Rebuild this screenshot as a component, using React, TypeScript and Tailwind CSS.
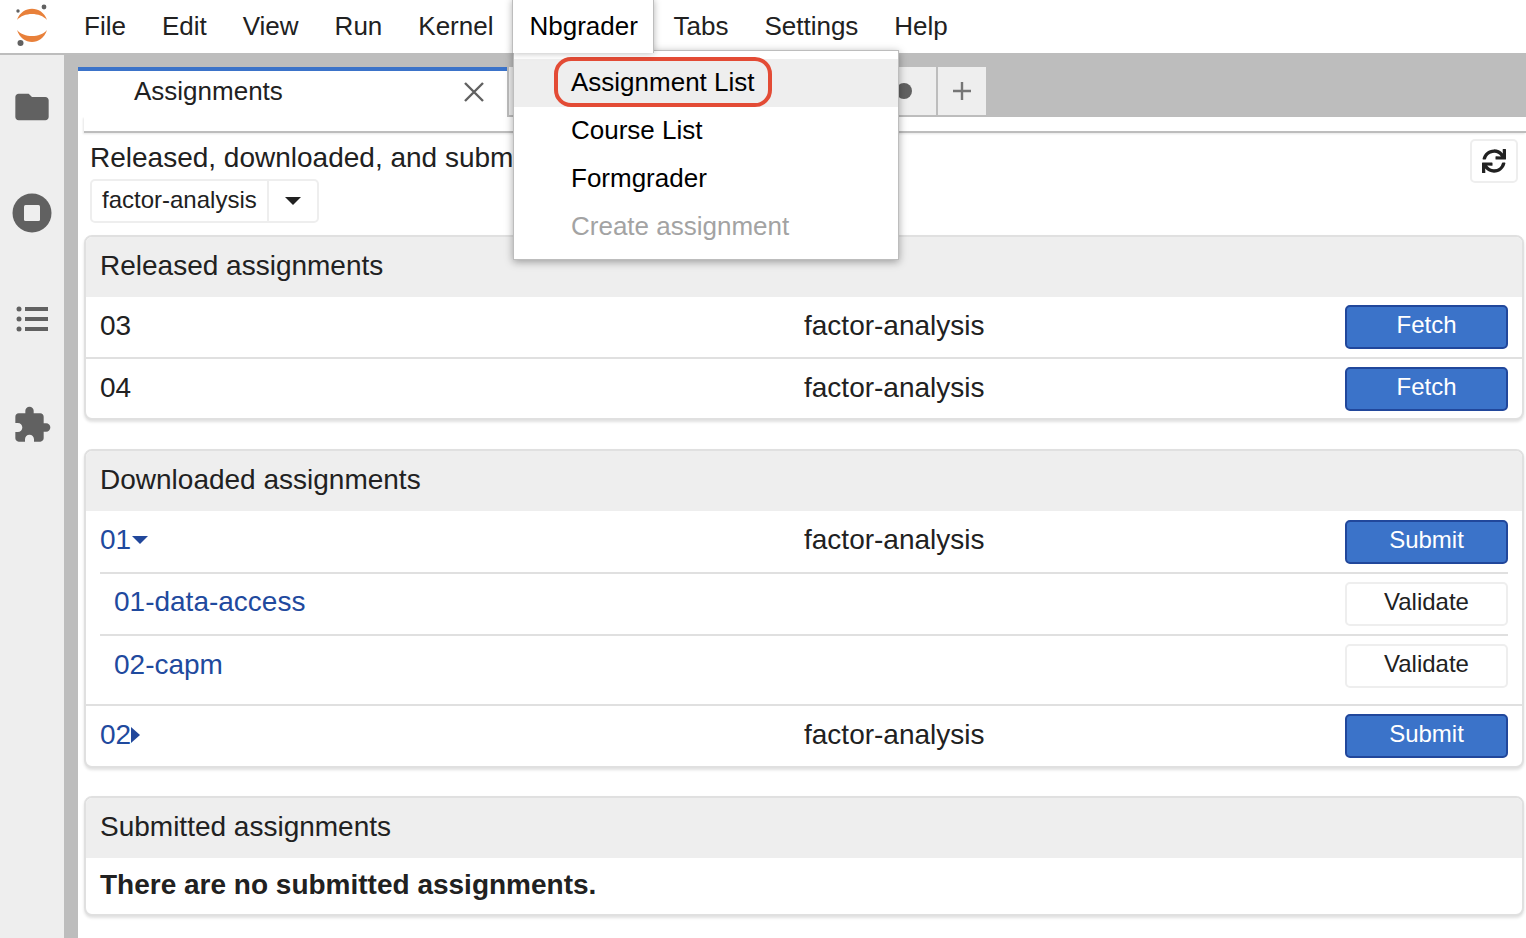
import React from 'react'
import { FaSync } from 'react-icons/fa'
import { MdExtension, MdFolder } from 'react-icons/md'

const menus = ['File', 'Edit', 'View', 'Run', 'Kernel', 'Nbgrader', 'Tabs', 'Settings', 'Help']

const JupyterLogo = () => (
  <svg width="64" height="53" viewBox="0 0 64 53">
    <path d="M17 20C22 5 42 5 47 20C40 12 24 12 17 20Z" fill="#e8803a" />
    <path d="M17 30C24 38 40 38 47 30C42 46 22 46 17 30Z" fill="#e8803a" />
    <circle cx="44" cy="7" r="2.4" fill="#616161" />
    <circle cx="18" cy="11" r="1.7" fill="#616161" />
    <circle cx="20.5" cy="43" r="3" fill="#616161" />
  </svg>
)

const StopIcon = () => (
  <svg width="40" height="40" viewBox="0 0 40 40">
    <circle cx="20" cy="20" r="19.5" fill="#616161" />
    <rect x="12" y="12" width="16" height="16" rx="1.5" fill="#eeeeee" />
  </svg>
)

const ListIcon = () => (
  <svg width="32" height="26" viewBox="0 0 32 26">
    <circle cx="3" cy="3" r="2.5" fill="#616161" />
    <circle cx="3" cy="13" r="2.5" fill="#616161" />
    <circle cx="3" cy="23" r="2.5" fill="#616161" />
    <rect x="9" y="1" width="23" height="4" fill="#616161" />
    <rect x="9" y="11" width="23" height="4" fill="#616161" />
    <rect x="9" y="21" width="23" height="4" fill="#616161" />
  </svg>
)

const BlueButton = ({ label }: { label: string }) => (
  <button className="w-[163px] h-[44px] shrink-0 rounded-[5px] border-2 border-[#21479b] bg-[#3b73c9] text-white text-[24px] leading-none pb-[4px]">
    {label}
  </button>
)

const PlainButton = ({ label }: { label: string }) => (
  <button className="w-[163px] h-[44px] shrink-0 rounded-[5px] border-2 border-[#eeeeee] bg-white text-[#212121] text-[24px] leading-none pb-[4px]">
    {label}
  </button>
)

const Panel = ({ title, className, children }: { title: string; className: string; children: React.ReactNode }) => (
  <section className={`ml-[6px] mr-[2px] rounded-[8px] border-2 border-[#e0e0e0] bg-white overflow-hidden shadow-[0_2px_3px_rgba(0,0,0,0.12)] ${className}`}>
    <h2 className="h-[60px] bg-[#eeeeee] pl-[14px] flex items-center text-[28px] text-[#212121] pb-[2px]">{title}</h2>
    {children}
  </section>
)

const App = () => {
  return (
    <div className="w-[1526px] h-[938px] relative overflow-hidden bg-white font-['Liberation_Sans',Arial,sans-serif]">
      {/* top menu */}
      <header className="h-[53px] flex items-stretch bg-white">
        <div className="w-[66px] shrink-0"><JupyterLogo /></div>
        {menus.map((m) => (
          <div
            key={m}
            className={
              m === 'Nbgrader'
                ? 'relative z-20 w-[142px] ml-[1px] mr-[1px] pl-[16px] bg-white text-black text-[26px] flex items-center pb-[1px] shadow-[0_0_7px_rgba(0,0,0,0.3)] border-x border-[#bdbdbd] h-[53px]'
                : 'px-[18px] text-[26px] text-[#212121] flex items-center pb-[1px]'
            }
          >
            {m}
          </div>
        ))}
      </header>

      <div className="h-[885px] flex">
        {/* side bar */}
        <aside className="w-[64px] shrink-0 bg-[#eeeeee] flex flex-col items-center border-t-2 border-[#bdbdbd]">
          <MdFolder className="mt-[32px] text-[#616161]" size={40} />
          <div className="mt-[66px]"><StopIcon /></div>
          <div className="mt-[73px] -ml-[1px]"><ListIcon /></div>
          <MdExtension className="mt-[73px] text-[#616161]" size={40} />
        </aside>
        <div className="w-[14px] shrink-0 bg-[#bdbdbd]" />

        <main className="flex-1 min-w-0">
          {/* tab bar */}
          <div className="h-[64px] bg-[#bdbdbd] flex items-end">
            <div className="w-[429px] h-[50px] bg-white border-t-4 border-[#3b73c9] flex items-center justify-between pl-[56px] pr-[22px] text-[26px] text-[#212121] pb-[5px]">
              <span>Assignments</span>
              <svg width="22" height="22" viewBox="0 0 22 22"><path d="M2 2L20 20M20 2L2 20" stroke="#616161" strokeWidth="2.4" fill="none" /></svg>
            </div>
            <div className="w-[431px] h-[48px] mb-[2px] bg-[#eeeeee] border-x-2 border-[#bdbdbd] flex items-center justify-end pr-[24px]">
              <div className="w-[16px] h-[16px] rounded-full bg-[#616161]" />
            </div>
            <div className="w-[48px] h-[48px] mb-[2px] bg-[#eeeeee] flex items-center justify-center">
              <svg width="18" height="18" viewBox="0 0 18 18"><path d="M9 0V18M0 9H18" stroke="#757575" strokeWidth="2.4" fill="none" /></svg>
            </div>
          </div>

          <div className="h-[16px] ml-[6px] bg-white border-b-2 border-[#bdbdbd] shadow-[-1px_1px_2px_rgba(0,0,0,0.1)]" />

          {/* toolbar */}
          <div className="h-[102px] flex justify-between pl-[12px] pr-[8px]">
            <div>
              <p className="h-[47px] pt-[7px] leading-[36px] text-[28px] text-[#212121]">
                Released, downloaded, and submitted assignments for course:
              </p>
              <div className="w-[229px] h-[44px] -mt-[1px] flex rounded-[5px] border-2 border-[#eeeeee] text-[24px] text-[#212121]">
                <span className="w-[177px] pl-[10px] flex items-center border-r-2 border-[#eeeeee] pb-[3px]">factor-analysis</span>
                <span className="flex-1 flex items-center justify-center">
                  <svg width="16" height="8" viewBox="0 0 16 8"><path d="M0 0H16L8 8Z" fill="#212121" /></svg>
                </span>
              </div>
            </div>
            <button className="mt-[6px] w-[48px] h-[44px] rounded-[5px] border-2 border-[#eeeeee] flex items-center justify-center text-[#212121]">
              <FaSync size={24} />
            </button>
          </div>

          <Panel title="Released assignments" className="h-[185px]">
            <div className="h-[62px] px-[14px] flex items-center border-b-2 border-[#e0e0e0] text-[28px] text-[#212121]">
              <span className="w-[704px] pb-[2px]">03</span>
              <span className="flex-1 pb-[2px]">factor-analysis</span>
              <BlueButton label="Fetch" />
            </div>
            <div className="h-[60px] px-[14px] flex items-center text-[28px] text-[#212121]">
              <span className="w-[704px] pb-[3px]">04</span>
              <span className="flex-1 pb-[3px]">factor-analysis</span>
              <BlueButton label="Fetch" />
            </div>
          </Panel>

          <Panel title="Downloaded assignments" className="mt-[29px] h-[319px]">
            <div className="mx-[14px] h-[63px] flex items-center border-b-2 border-[#e0e0e0] text-[28px] text-[#212121]">
              <span className="w-[704px] flex items-center text-[#1f4a9e] pb-[4px]">
                01
                <svg className="ml-[1px]" width="16" height="8" viewBox="0 0 16 8"><path d="M0 0H16L8 8Z" fill="#21479b" /></svg>
              </span>
              <span className="flex-1 pb-[4px]">factor-analysis</span>
              <BlueButton label="Submit" />
            </div>
            <div className="mx-[14px] h-[62px] flex items-center border-b-2 border-[#e0e0e0] text-[28px] text-[#1f4a9e]">
              <span className="flex-1 pl-[14px] pb-[4px]">01-data-access</span>
              <PlainButton label="Validate" />
            </div>
            <div className="mx-[14px] h-[68px] pt-[8px] flex items-start text-[28px] text-[#1f4a9e]">
              <span className="flex-1 h-[44px] pl-[14px] flex items-center pb-[3px]">02-capm</span>
              <PlainButton label="Validate" />
            </div>
            <div className="h-[62px] px-[14px] flex items-center border-t-2 border-[#e0e0e0] text-[28px] text-[#212121]">
              <span className="w-[704px] flex items-center text-[#1f4a9e] pb-[3px]">
                02
                <svg width="9" height="16" viewBox="0 0 9 16"><path d="M0 0L9 8L0 16Z" fill="#21479b" /></svg>
              </span>
              <span className="flex-1 pb-[3px]">factor-analysis</span>
              <BlueButton label="Submit" />
            </div>
          </Panel>

          <Panel title="Submitted assignments" className="mt-[28px] h-[120px]">
            <div className="h-[56px] pl-[14px] flex items-center text-[28px] font-bold text-[#212121] pb-[3px]">
              There are no submitted assignments.
            </div>
          </Panel>
        </main>
      </div>

      {/* Nbgrader dropdown */}
      <div className="absolute z-10 left-[513px] top-[50px] w-[386px] h-[210px] bg-white border border-[#bdbdbd] pt-[8px] shadow-[0_2px_8px_rgba(0,0,0,0.35)] text-[26px] text-black">
        <div className="relative h-[48px] bg-[#eeeeee] pl-[57px] flex items-center pb-[1px]">
          Assignment List
          <span className="absolute left-[40px] top-[-2px] w-[218px] h-[50px] rounded-[17px] border-[4px] border-[#e34b35]" />
        </div>
        <div className="h-[48px] pl-[57px] flex items-center pb-[1px]">Course List</div>
        <div className="h-[48px] pl-[57px] flex items-center pb-[1px]">Formgrader</div>
        <div className="h-[48px] pl-[57px] flex items-center pb-[1px] text-[#a3a3a3]">Create assignment</div>
      </div>
    </div>
  )
}

export default App
